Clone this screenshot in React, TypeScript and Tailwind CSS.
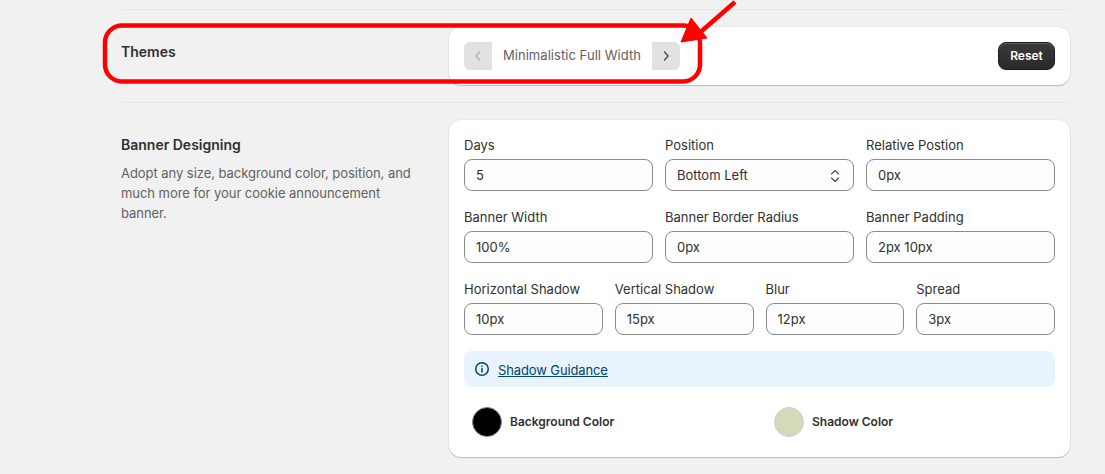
import React from "react";

function Field({ label, value, select }: { label: string; value: string; select?: boolean }) {
  return (
    <div className="flex-1 min-w-0">
      <div className="text-[13px] leading-[20px] text-[#303030] mb-[4px]">{label}</div>
      <div className="h-[32px] rounded-[8px] border border-[#8a8a8a] bg-[#fdfdfd] pl-[11px] pr-[12px] pt-[1px] flex items-center justify-between text-[13px] text-[#303030]">
        <span>{value}</span>
        {select && (
          <svg width="12" height="16" viewBox="0 0 12 16" fill="none" stroke="#4a4a4a" strokeWidth="1.1" strokeLinecap="round" strokeLinejoin="round">
            <path d="M2.5 6 L6 2.5 L9.5 6" />
            <path d="M2.5 10 L6 13.5 L9.5 10" />
          </svg>
        )}
      </div>
    </div>
  );
}

export default function App() {
  return (
    <div className="relative w-[1105px] h-[474px] overflow-hidden bg-[#f1f1f1] font-['Inter',sans-serif]">
      <div className="ml-[121px] w-[949px] pt-[9px]">
        <div className="border-t border-[#e6e6e6] pt-[17px] pb-[17px] flex">
          <div className="w-[328px] pt-[15px] text-[14px] leading-[20px] font-semibold text-[#303030]">Themes</div>
          <div className="flex-1 h-[58px] rounded-[12px] bg-white shadow-[0_1px_1px_rgba(0,0,0,0.2),0_0_0_1px_rgba(0,0,0,0.03)] px-[15px] flex items-center justify-between">
            <div className="flex items-center h-[28px]">
              <div className="w-[28px] h-[28px] rounded-l-[6px] bg-[#e2e2e2] flex items-center justify-center">
                <svg width="12" height="14" viewBox="0 0 12 14" fill="none" stroke="#b5b5b5" strokeWidth="1.4" strokeLinecap="round" strokeLinejoin="round"><path d="M7.5 3 L4 7 L7.5 11" /></svg>
              </div>
              <div className="w-[160px] text-center text-[13px] text-[#616161] tracking-[0.05px]">Minimalistic Full Width</div>
              <div className="w-[28px] h-[28px] rounded-r-[6px] bg-[#e2e2e2] flex items-center justify-center">
                <svg width="12" height="14" viewBox="0 0 12 14" fill="none" stroke="#4a4a4a" strokeWidth="1.4" strokeLinecap="round" strokeLinejoin="round"><path d="M4.5 3 L8 7 L4.5 11" /></svg>
              </div>
            </div>
            <button className="h-[28px] w-[57px] rounded-[8px] bg-gradient-to-b from-[#3a3a3a] to-[#2a2a2a] border border-[#1a1a1a] shadow-[inset_0_1px_0_rgba(255,255,255,0.2)] text-white text-[12px] font-semibold">Reset</button>
          </div>
        </div>
        <div className="border-t border-[#e6e6e6] pt-[17px] flex">
          <div className="w-[328px] pt-[15px] pr-[30px]">
            <div className="text-[14px] leading-[20px] font-semibold text-[#303030] mb-[8px]">Banner Designing</div>
            <div className="text-[13px] leading-[20px] text-[#616161] tracking-[-0.05px]">Adopt any size, background color, position, and much more for your cookie announcement banner.</div>
          </div>
          <div className="flex-1 h-[337px] rounded-[12px] bg-white shadow-[0_1px_1px_rgba(0,0,0,0.2),0_0_0_1px_rgba(0,0,0,0.03)] p-[15px]">
            <div className="flex gap-[12px] mb-[16px]">
              <Field label="Days" value="5" />
              <Field label="Position" value="Bottom Left" select />
              <Field label="Relative Postion" value="0px" />
            </div>
            <div className="flex gap-[12px] mb-[16px]">
              <Field label="Banner Width" value="100%" />
              <Field label="Banner Border Radius" value="0px" />
              <Field label="Banner Padding" value="2px 10px" />
            </div>
            <div className="flex gap-[12px] mb-[16px]">
              <Field label="Horizontal Shadow" value="10px" />
              <Field label="Vertical Shadow" value="15px" />
              <Field label="Blur" value="12px" />
              <Field label="Spread" value="3px" />
            </div>
            <div className="h-[36px] rounded-[8px] bg-[#e8f3fd] flex items-center pl-[10px] gap-[9px]">
              <svg width="16" height="16" viewBox="0 0 16 16" fill="none" stroke="#00456b" strokeWidth="1.5" strokeLinecap="round">
                <circle cx="8" cy="8" r="6.25" />
                <path d="M8 7.5 V11" />
                <path d="M8 5 V5.2" />
              </svg>
              <span className="text-[13px] leading-[20px] pt-[1px] text-[#00456b] underline tracking-[-0.12px] -ml-[1px]">Shadow Guidance</span>
            </div>
            <div className="flex mt-[20px] ml-[8px]">
              <div className="w-[302px] flex items-center gap-[8px]">
                <div className="w-[30px] h-[30px] rounded-full bg-black border border-[#8a8a8a]" />
                <span className="text-[12px] font-semibold text-[#303030]">Background Color</span>
              </div>
              <div className="flex items-center gap-[8px]">
                <div className="w-[30px] h-[30px] rounded-full bg-[#d6d9b9] border border-[#cfcfcf]" />
                <span className="text-[12px] font-semibold text-[#303030]">Shadow Color</span>
              </div>
            </div>
          </div>
        </div>
      </div>
      <svg className="absolute left-0 top-0 pointer-events-none" width="1105" height="474" fill="none">
        <rect x="105" y="25.5" width="595" height="56" rx="17" stroke="#ff0000" strokeWidth="4.5" />
        <path d="M735 2 L696 36" stroke="#ff0000" strokeWidth="4.5" />
        <path d="M681 42 L707 38 L691 18 Z" fill="#ff0000" stroke="#ff0000" strokeWidth="1" />
      </svg>
    </div>
  );
}
